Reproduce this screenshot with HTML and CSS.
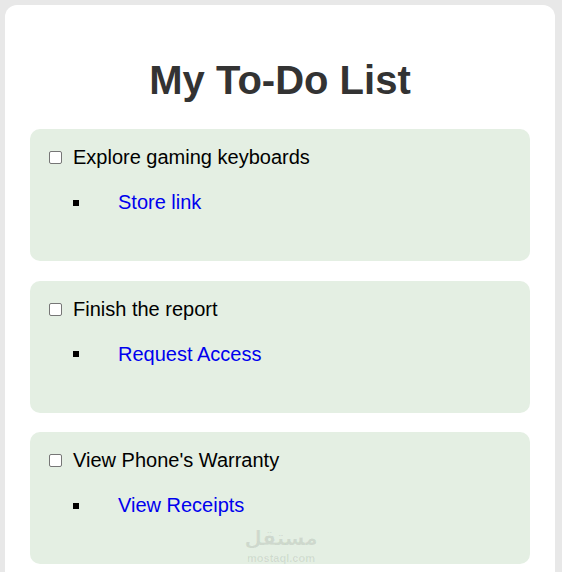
FILE: index.html
```html
<!DOCTYPE html>
<html lang="en">
<head>
<meta charset="UTF-8">
<title>My To-Do List</title>
<link rel="stylesheet" href="styles.css">
</head>
<body>
<div class="container">
  <h1>My To-Do List</h1>
  <div class="task">
    <label class="taskTitle"><input type="checkbox">Explore gaming keyboards</label>
    <ul class="taskLinks">
      <li><a href="#">Store link</a></li>
    </ul>
  </div>
  <div class="task">
    <label class="taskTitle"><input type="checkbox">Finish the report</label>
    <ul class="taskLinks">
      <li><a href="#">Request Access</a></li>
    </ul>
  </div>
  <div class="task">
    <label class="taskTitle"><input type="checkbox">View Phone's Warranty</label>
    <ul class="taskLinks">
      <li><a href="#">View Receipts</a></li>
    </ul>
  </div>
</div>
<div class="watermark">
  <span class="wmArabic">مستقل</span>
  <span class="wmLatin">mostaql.com</span>
</div>
</body>
</html>
```

FILE: styles.css
```css
body {
  font-family: "Liberation Sans", Arial, sans-serif;
  font-size: 20px;
  background-color: rgb(232, 232, 232);
  margin: 0;
  padding: 5px;
}
.container {
  width: 550px;
  box-sizing: border-box;
  padding: 25px 25px 40px;
  background-color: #fff;
  border-radius: 12px;
}
h1 {
  text-align: center;
  color: #333;
  font-size: 40px;
  line-height: 46px;
  margin: 27px 0 26px;
}
.task {
  background-color: rgb(228, 239, 227);
  border-radius: 10px;
  padding: 17px 15px;
  margin-bottom: 19.5px;
}
.taskTitle {
  display: flex;
  align-items: center;
  line-height: 23px;
  color: #000;
}
.taskTitle input {
  appearance: none;
  width: 13px;
  height: 13px;
  margin: 0 11px 0 4px;
  border: 1px solid rgb(118, 118, 118);
  border-radius: 2px;
  background-color: #fff;
  box-sizing: border-box;
}
.taskLinks {
  list-style-type: none;
  margin: 22px 0 30px;
  padding-left: 28px;
}
.taskLinks li {
  display: flex;
  align-items: center;
  gap: 39px;
  line-height: 23px;
}
.taskLinks li::before {
  content: "";
  width: 6px;
  height: 6px;
  background-color: #000;
}
.taskLinks a {
  color: rgb(0, 0, 238);
  text-decoration: none;
}
.watermark {
  position: absolute;
  left: 246px;
  top: 524px;
  width: 70px;
  display: flex;
  flex-direction: column;
  align-items: center;
  color: rgba(0, 0, 0, 0.09);
  font-weight: bold;
}
.wmArabic {
  font-family: "DejaVu Sans", sans-serif;
  font-size: 20px;
  line-height: 28px;
}
.wmLatin {
  font-size: 11px;
  line-height: 12px;
}
```
